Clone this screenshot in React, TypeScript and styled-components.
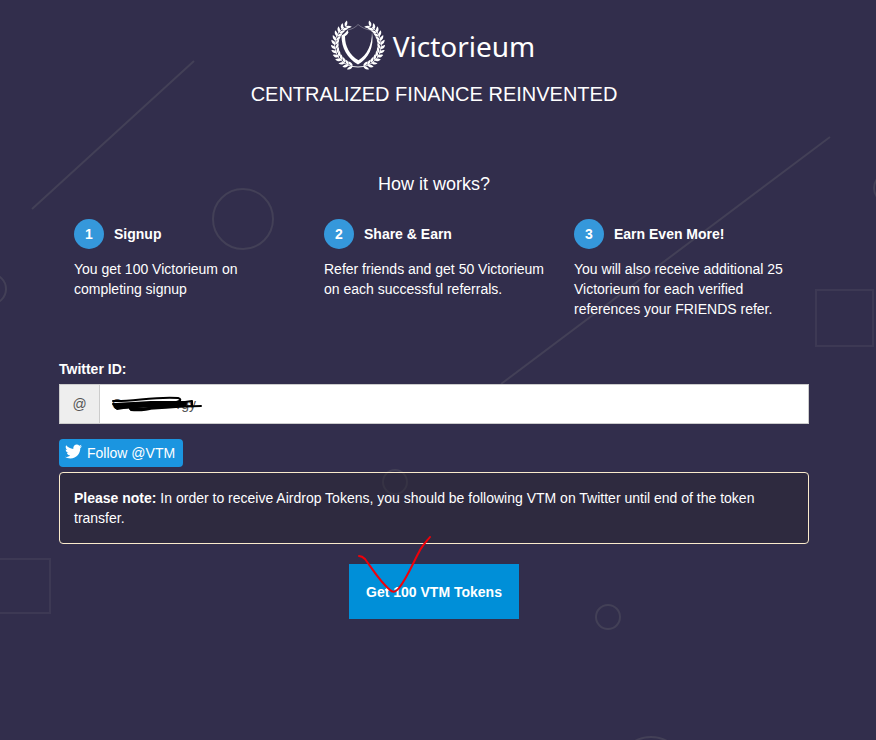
import React from "react";
import styled, { createGlobalStyle } from "styled-components";
import { FaTwitter } from "react-icons/fa";

const GlobalStyle = createGlobalStyle`
  *, *::before, *::after { box-sizing: border-box; }
  html, body { margin: 0; padding: 0; background: #322e4c; }
  body {
    font-family: "Liberation Sans", Arial, sans-serif;
    font-size: 14px;
    line-height: 20px;
    color: #fff;
  }
`;

const Page = styled.div`
  position: relative;
  min-height: 100vh;
  overflow: hidden;
  padding: 20px 8px 40px 0;
`;

const Shapes = styled.svg`
  position: absolute;
  top: 0;
  left: 0;
  pointer-events: none;
`;

const Container = styled.main`
  position: relative;
  max-width: 750px;
  margin: 0 auto;
`;

const Header = styled.header`
  display: flex;
  flex-direction: column;
  align-items: center;
  gap: 8px;
`;

const Brand = styled.a`
  display: flex;
  align-items: center;
  gap: 8px;
  height: 52px;
  padding-right: 2px;
  color: #fff;
  text-decoration: none;
  font-family: "Noto Sans", "Open Sans", sans-serif;
  font-size: 28px;
  line-height: 52px;
`;

const Tagline = styled.h1`
  margin: 0;
  font-size: 20px;
  line-height: 28px;
  font-weight: 400;
  text-transform: uppercase;
`;

const SectionTitle = styled.h2`
  margin: 64px 0 23px;
  font-size: 18px;
  line-height: 24px;
  font-weight: 400;
  text-align: center;
`;

const Steps = styled.section`
  display: grid;
  grid-template-columns: repeat(3, 1fr);
`;

const Step = styled.article`
  padding: 0 10px 0 15px;
`;

const StepHeader = styled.div`
  display: flex;
  align-items: center;
  gap: 10px;
  margin-bottom: 10px;
`;

const StepNumber = styled.span`
  display: flex;
  align-items: center;
  justify-content: center;
  width: 30px;
  height: 30px;
  border-radius: 50%;
  background: #3598db;
  font-weight: 700;
`;

const StepTitle = styled.h3`
  margin: 0;
  font-size: 14px;
  line-height: 20px;
`;

const StepText = styled.p`
  margin: 0;
`;

const Form = styled.form`
  display: flex;
  flex-direction: column;
  align-items: flex-start;
  margin-top: 40px;
`;

const Label = styled.label`
  margin-bottom: 5px;
  font-weight: 700;
`;

const InputGroup = styled.div`
  position: relative;
  display: flex;
  width: 100%;
  height: 40px;
  margin-bottom: 15px;
  border: 1px solid #ccc;
  background: #fff;
`;

const Addon = styled.span`
  display: flex;
  align-items: center;
  justify-content: center;
  width: 40px;
  border-right: 1px solid #ccc;
  background: #eee;
  color: #555;
`;

const TextInput = styled.input`
  flex: 1;
  min-width: 0;
  padding: 0 12px;
  border: 0;
  outline: 0;
  background: transparent;
  color: #555;
  font: inherit;
`;

const Scribble = styled.svg`
  position: absolute;
  top: 9px;
  left: 46px;
  pointer-events: none;
`;

const FollowLink = styled.a`
  display: flex;
  align-items: center;
  gap: 5px;
  height: 28px;
  padding: 0 8px 0 6px;
  margin-bottom: 5px;
  border-radius: 4px;
  background: #1b95e0;
  color: #fff;
  text-decoration: none;
`;

const Bird = styled(FaTwitter)`
  align-self: flex-start;
  margin-top: 4px;
`;

const Notice = styled.p`
  width: 100%;
  margin: 0 0 20px;
  padding: 15px 14px;
  border: 1px solid #faebcc;
  border-radius: 4px;
  background: rgba(42, 38, 50, 0.5);
`;

const SubmitArea = styled.div`
  position: relative;
  align-self: center;
`;

const SubmitButton = styled.button`
  height: 55px;
  padding: 0 17px;
  border: 0;
  background: #008fd8;
  color: #fff;
  font: inherit;
  font-weight: 700;
  cursor: pointer;
`;

const CheckMark = styled.svg`
  position: absolute;
  top: -29px;
  left: 8px;
  pointer-events: none;
`;

const leafAngles = [34, 45, 56, 67, 78, 89, 100, 111, 122, 133, 144, 155, 166];

function Branch() {
  return (
    <>
      <path d="M13 7 A22 22 0 0 0 27 47" fill="none" stroke="#fff" strokeWidth="0.9" />
      {leafAngles.map((angle) => {
        const t = (angle * Math.PI) / 180;
        const x = 27 - 22.5 * Math.sin(t);
        const y = 25 - 22 * Math.cos(t);
        return (
          <g key={angle} transform={`translate(${x} ${y}) rotate(${-angle})`}>
            <path d="M0 0 C1.5 -2 4 -2 6.4 0 C4 1.5 1.5 1.5 0 0Z" transform="rotate(-42)" />
            <path d="M0 0 C1.5 -1.5 4 -1.5 6.4 0 C4 1.9 1.5 1.9 0 0Z" transform="rotate(34)" />
          </g>
        );
      })}
    </>
  );
}

function Crest() {
  return (
    <svg width="54" height="52" viewBox="0 0 54 52" fill="#fff" aria-hidden="true">
      <Branch />
      <g transform="translate(54 0) scale(-1 1)">
        <Branch />
      </g>
      <path
        d="M12 16 L17 10 C21 9.3 25 7 27 4.5 C30 7 34 9.3 39 10 L41.5 12 C42 26 37 38 27 43.5 C17 37 12 28 12 16Z"
        fill="#322e4c"
      />
      <path d="M10.5 15.5 C13 14.5 15 12.5 16.5 10 L17.5 12.5 C16.5 14.5 15.5 15.5 14 16.2 C14 26 18.5 35 27.5 40.3 C36 35 41 25 41 12 C43.5 27 37.5 38.5 27 44.5 C16 38 10.5 28 10.5 15.5Z" />
      <path d="M17 10 C21 9.3 25 7 27 4.5 C30 7 34 9.3 39 10 L41 12" fill="none" stroke="#fff" strokeOpacity="0.35" strokeWidth="0.9" />
    </svg>
  );
}

const steps = [
  { title: "Signup", text: "You get 100 Victorieum on completing signup" },
  { title: "Share & Earn", text: "Refer friends and get 50 Victorieum on each successful referrals." },
  {
    title: "Earn Even More!",
    text: "You will also receive additional 25 Victorieum for each verified references your FRIENDS refer.",
  },
];

const initialId = "C" + "\u00a0".repeat(14) + "rgy";

export default function App() {
  return (
    <Page>
      <GlobalStyle />
      <Shapes width="876" height="740" fill="none" stroke="#434057" strokeWidth="2" aria-hidden="true">
        <path d="M32 209 L194 61 M501 384 L830 137" />
        <circle cx="243" cy="219" r="30" />
        <circle cx="-9" cy="289" r="15" />
        <circle cx="889" cy="188" r="15" />
        <circle cx="395" cy="482" r="12" />
        <circle cx="608" cy="617" r="12" />
        <circle cx="651" cy="770" r="33" />
        <g stroke="#3d3954">
          <rect x="816" y="290" width="57" height="56" />
          <rect x="-10" y="559" width="60" height="54" />
        </g>
      </Shapes>
      <Container>
        <Header>
          <Brand href="#">
            <Crest />
            <span>Victorieum</span>
          </Brand>
          <Tagline>Centralized Finance Reinvented</Tagline>
        </Header>
        <SectionTitle>How it works?</SectionTitle>
        <Steps>
          {steps.map((step, index) => (
            <Step key={step.title}>
              <StepHeader>
                <StepNumber>{index + 1}</StepNumber>
                <StepTitle>{step.title}</StepTitle>
              </StepHeader>
              <StepText>{step.text}</StepText>
            </Step>
          ))}
        </Steps>
        <Form onSubmit={(event) => event.preventDefault()}>
          <Label htmlFor="twitter-id">Twitter ID:</Label>
          <InputGroup>
            <Addon>@</Addon>
            <TextInput id="twitter-id" type="text" defaultValue={initialId} />
            <Scribble width="100" height="22" fill="none" stroke="#000" strokeLinecap="round" strokeLinejoin="round" aria-hidden="true">
              <path d="M11 12 L45 10 L78 10" strokeWidth="6" />
              <path
                d="M7 7 C25 8 50 2 72 4 C78 6 72 9 60 9 L7 10 L11 15 C35 11 55 12 86 7 L86 12 C70 13 50 13 24 15 C50 16 65 12 95 12 M25 16 C37 17 45 15 60 12"
                strokeWidth="2"
              />
            </Scribble>
          </InputGroup>
          <FollowLink href="#">
            <Bird size={17} aria-hidden="true" />
            <span>Follow @VTM</span>
          </FollowLink>
          <Notice>
            <strong>Please note:</strong> In order to receive Airdrop Tokens, you should be following VTM on Twitter
            until end of the token transfer.
          </Notice>
          <SubmitArea>
            <SubmitButton type="submit">Get 100 VTM Tokens</SubmitButton>
            <CheckMark width="76" height="60" viewBox="0 0 76 60" fill="none" stroke="#f00009" strokeWidth="2" strokeLinecap="round" aria-hidden="true">
              <path d="M2 21 C5 21 6 22 8 24 C16 35 24 48 33 55 C36 58 39 57 42 53 C50 43 55 30 62 17 C65 11 69 7 73 2" />
            </CheckMark>
          </SubmitArea>
        </Form>
      </Container>
    </Page>
  );
}
